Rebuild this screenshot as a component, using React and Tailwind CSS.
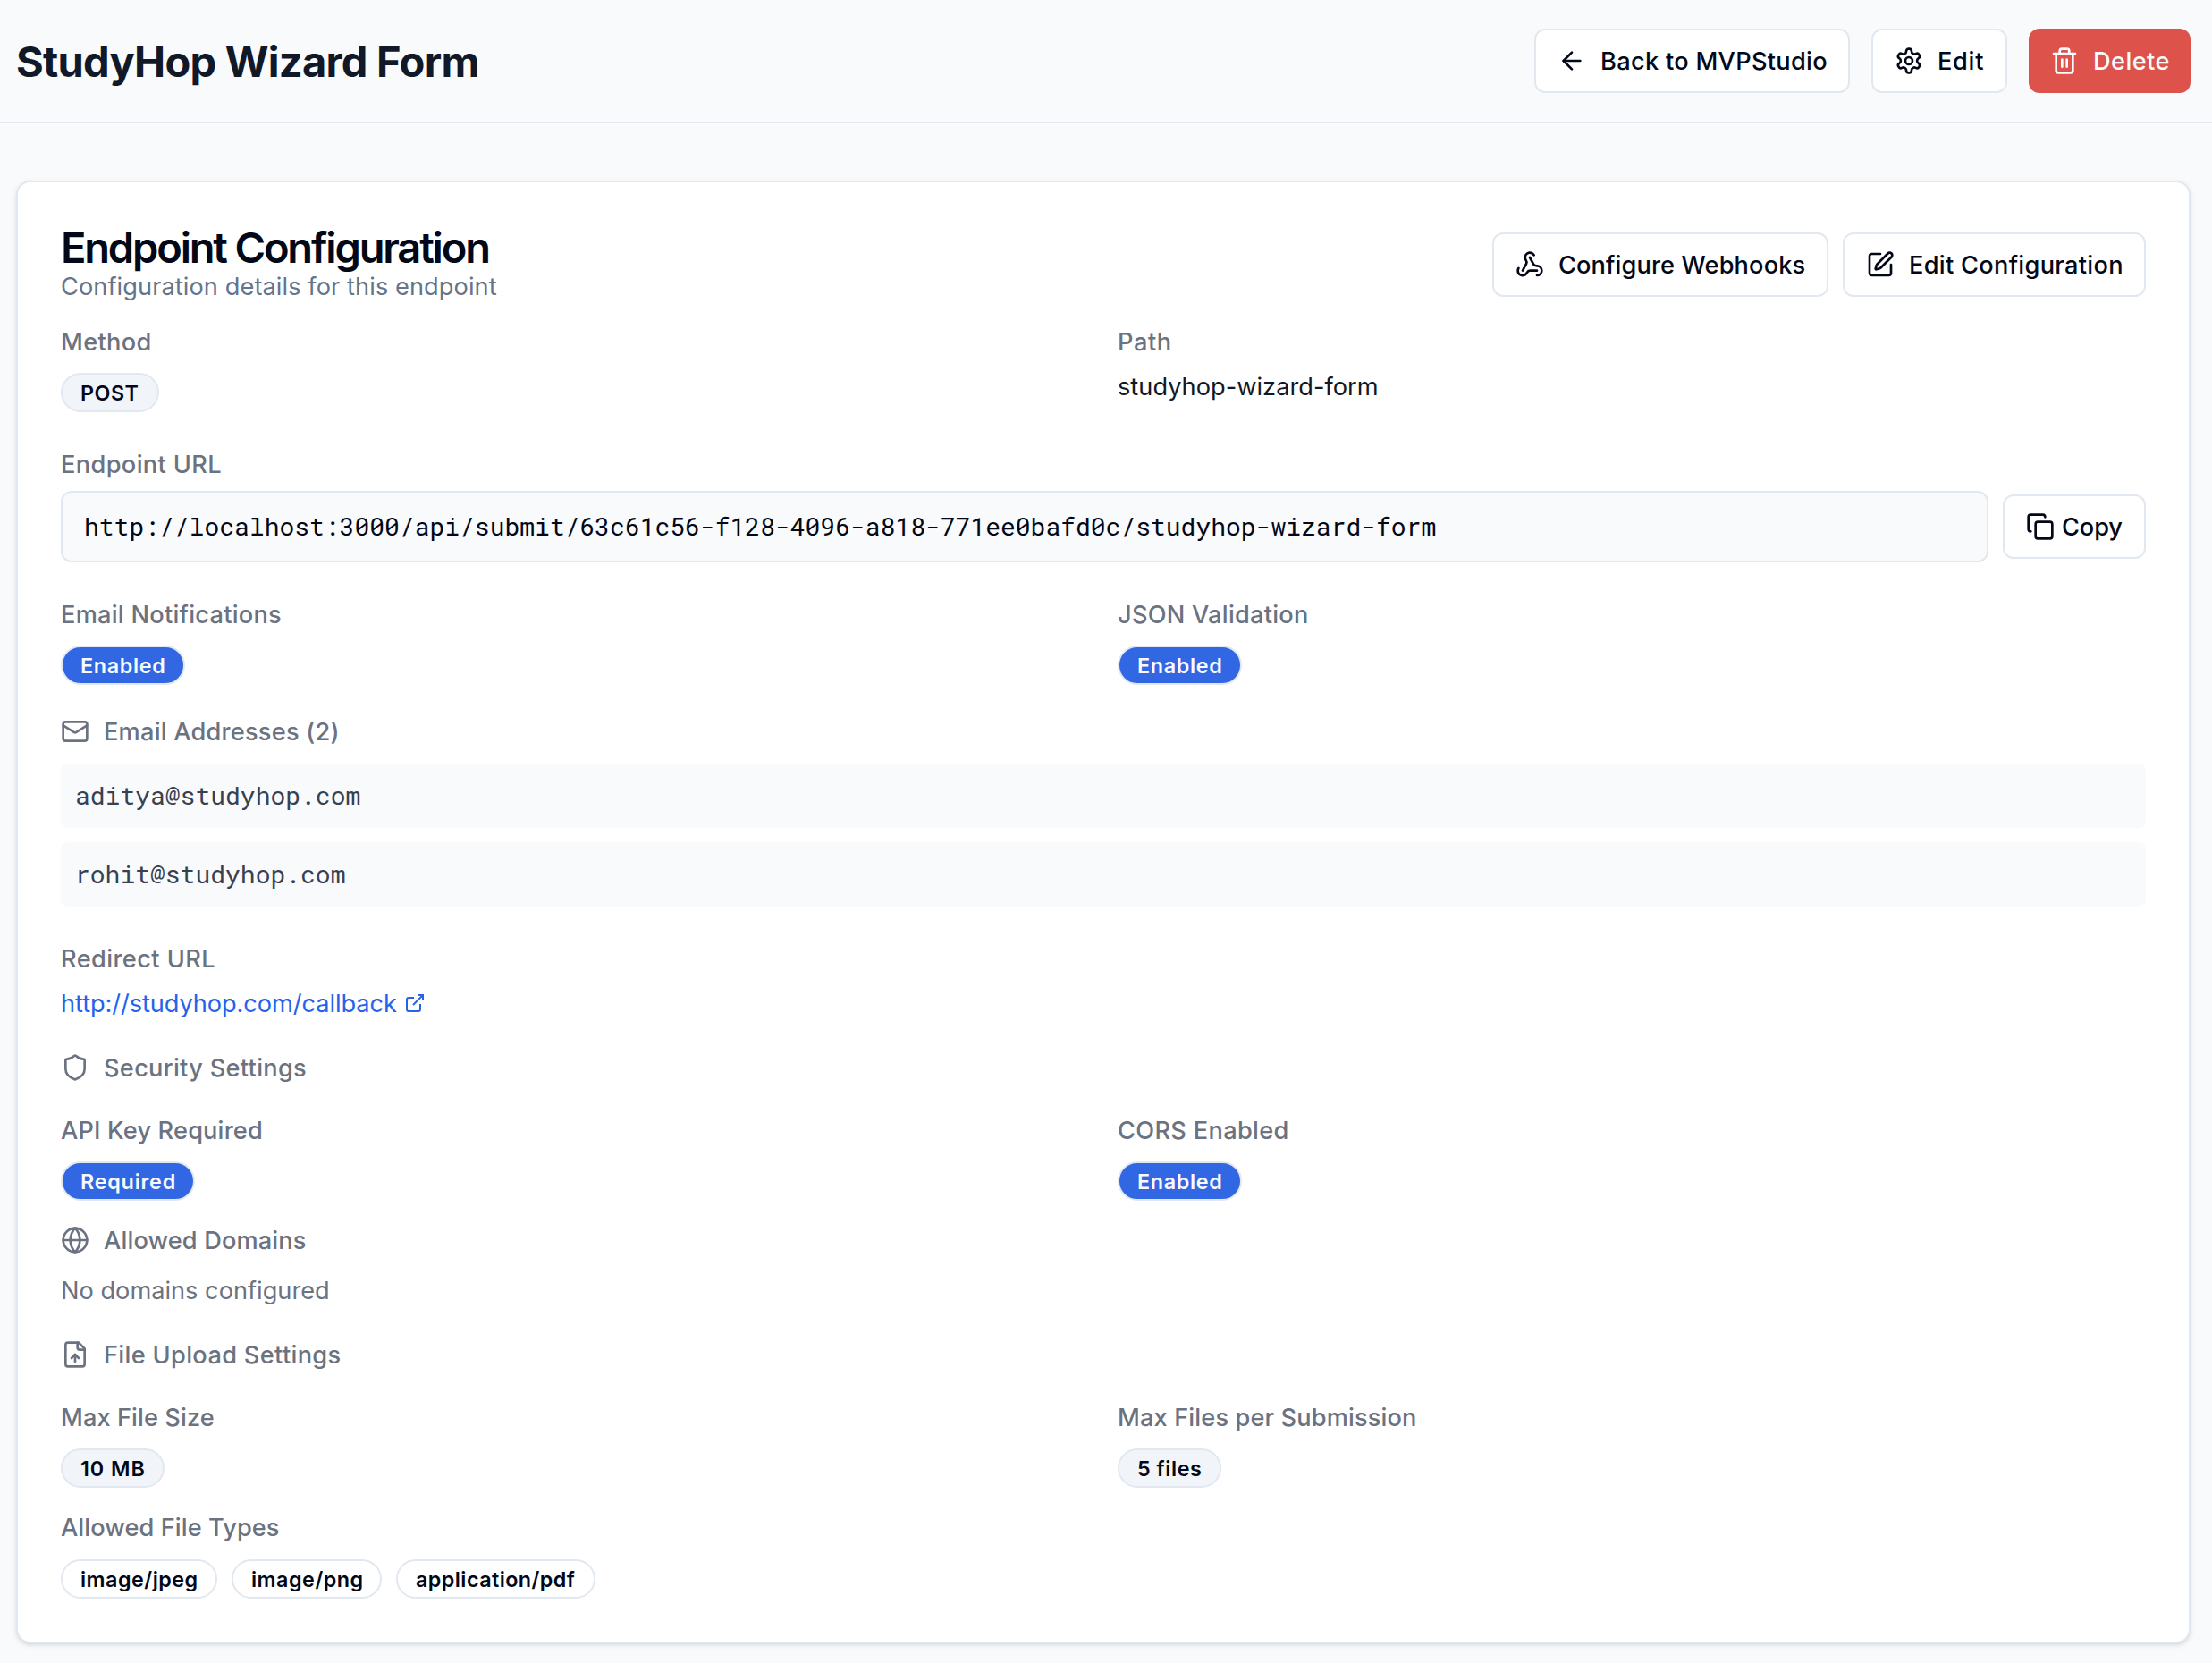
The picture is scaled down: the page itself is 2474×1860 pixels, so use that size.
import React from "react";
import { ArrowLeft, Copy, Globe, Mail, Shield, SquarePen, Trash2, Webhook } from "lucide-react";
import clsx from "clsx";

function Icon({ className, children, ...rest }) {
  return (
    <svg
      viewBox="0 0 24 24"
      fill="none"
      stroke="currentColor"
      strokeWidth="2"
      strokeLinecap="round"
      strokeLinejoin="round"
      className={clsx("shrink-0", className)}
      {...rest}
    >
      {children}
    </svg>
  );
}

function SettingsIcon({ className }) {
  return (
    <Icon className={className}>
      <path d="M12.22 2h-.44a2 2 0 0 0-2 2v.18a2 2 0 0 1-1 1.73l-.43.25a2 2 0 0 1-2 0l-.15-.08a2 2 0 0 0-2.73.73l-.22.38a2 2 0 0 0 .73 2.73l.15.1a2 2 0 0 1 1 1.72v.51a2 2 0 0 1-1 1.74l-.15.09a2 2 0 0 0-.73 2.73l.22.38a2 2 0 0 0 2.73.73l.15-.08a2 2 0 0 1 2 0l.43.25a2 2 0 0 1 1 1.73V20a2 2 0 0 0 2 2h.44a2 2 0 0 0 2-2v-.18a2 2 0 0 1 1-1.73l.43-.25a2 2 0 0 1 2 0l.15.08a2 2 0 0 0 2.73-.73l.22-.39a2 2 0 0 0-.73-2.73l-.15-.08a2 2 0 0 1-1-1.74v-.5a2 2 0 0 1 1-1.74l.15-.09a2 2 0 0 0 .73-2.73l-.22-.38a2 2 0 0 0-2.73-.73l-.15.08a2 2 0 0 1-2 0l-.43-.25a2 2 0 0 1-1-1.73V4a2 2 0 0 0-2-2z" />
      <circle cx="12" cy="12" r="3" />
    </Icon>
  );
}

function FileUpIcon({ className }) {
  return (
    <Icon className={className}>
      <path d="M15 2H6a2 2 0 0 0-2 2v16a2 2 0 0 0 2 2h12a2 2 0 0 0 2-2V7Z" />
      <path d="M14 2v4a2 2 0 0 0 2 2h4" />
      <path d="M12 12v6" />
      <path d="m15 15-3-3-3 3" />
    </Icon>
  );
}

function ExternalIcon({ className }) {
  return (
    <Icon className={className} strokeLinecap="butt" strokeLinejoin="miter">
      <path d="M18 13v6a2 2 0 0 1-2 2H5a2 2 0 0 1-2-2V8a2 2 0 0 1 2-2h6" />
      <path d="M15 3h6v6" />
      <path d="M10 14 21 3" />
    </Icon>
  );
}

const iconSize = "size-8 shrink-0";

const buttonTones = {
  outline: "border-2 border-[#e2e8f0] bg-white text-[#020817]",
  destructive: "bg-[#de524c] text-[#f8fafc]",
};

function Button({ icon: I, tone = "outline", gap = "gap-4", className, children }) {
  return (
    <button
      className={clsx(
        "flex h-[72px] shrink-0 items-center whitespace-nowrap rounded-xl px-6 text-[27.2px] font-medium leading-10",
        buttonTones[tone],
        gap,
        className
      )}
    >
      <I className={iconSize} />
      <span className="pt-0.5">{children}</span>
    </button>
  );
}

function Label({ className, children }) {
  return (
    <div className={clsx("h-10 whitespace-nowrap text-[27.2px] font-medium leading-[42px] text-[#6b7280]", className)}>
      {children}
    </div>
  );
}

function IconLabel({ icon: I, className, children }) {
  return (
    <div className={clsx("flex h-10 items-center gap-4 text-[#6b7280]", className)}>
      <I className={iconSize} />
      <Label>{children}</Label>
    </div>
  );
}

const badgeTones = {
  primary: "bg-[#3267e3] text-[#f8fafc]",
  secondary: "bg-[#f1f5f9] text-[#020817]",
  outline: "bg-white text-[#020817]",
};

function Badge({ tone = "primary", className, children }) {
  return (
    <div
      className={clsx(
        "flex h-11 items-center whitespace-nowrap rounded-full border-2 border-[#e2e8f0] pl-5 pt-px text-[23.3px] font-semibold leading-8",
        badgeTones[tone],
        className
      )}
    >
      {children}
    </div>
  );
}

function Columns({ className, children }) {
  return <div className={clsx("grid grid-cols-2 gap-8", className)}>{children}</div>;
}

const mono = "font-['Roboto_Mono','Liberation_Mono',monospace]";

export default function App() {
  return (
    <div className="h-[1860px] w-[2474px] overflow-hidden bg-[#f9fafc] font-['Inter',sans-serif]">
      <header className="flex h-[138px] items-center justify-between border-b-2 border-[#e2e8f0] pl-[18px] pr-6">
        <h1 className="whitespace-nowrap pt-0.5 text-[47px] font-bold leading-[64px] tracking-[-0.74px] text-[#111827]">
          StudyHop Wizard Form
        </h1>
        <div className="flex gap-6">
          <Button icon={ArrowLeft} className="w-[353px] tracking-[0.3px]">Back to MVPStudio</Button>
          <Button icon={SettingsIcon} className="w-[152px] tracking-[0.7px]">Edit</Button>
          <Button icon={Trash2} tone="destructive" className="w-[181px] tracking-[0.42px]">Delete</Button>
        </div>
      </header>

      <main className="mt-16 ml-[18px] mr-6 flex h-[1636px] flex-col rounded-2xl border-2 border-[#e2e8f0] bg-white p-12 shadow-[0_2px_6px_rgba(0,0,0,0.1),0_2px_4px_-2px_rgba(0,0,0,0.1)]">
        <div className="flex h-[88px] items-center justify-between">
          <div>
            <h2 className="h-12 whitespace-nowrap text-[47px] font-semibold leading-[50px] tracking-[-2.17px] text-[#020817]">
              Endpoint Configuration
            </h2>
            <p className="h-10 whitespace-nowrap text-[27.2px] leading-[42px] tracking-[0.08px] text-[#64748b]">
              Configuration details for this endpoint
            </p>
          </div>
          <div className="flex gap-4">
            <Button icon={Webhook} className="w-[376px] tracking-[0.12px]">Configure Webhooks</Button>
            <Button icon={SquarePen} className="w-[339px] tracking-[0.3px]">Edit Configuration</Button>
          </div>
        </div>

        <Columns className="mt-[22px] h-[99px]">
          <div>
            <Label className="tracking-[0.35px]">Method</Label>
            <Badge tone="secondary" className="mt-[15px] w-[110px] tracking-[0.5px]">POST</Badge>
          </div>
          <div>
            <Label className="tracking-[0.6px]">Path</Label>
            <p className="mt-2.5 h-10 text-[27.2px] leading-[42px] tracking-[0.02px] text-[#111827]">studyhop-wizard-form</p>
          </div>
        </Columns>

        <section className="mt-[38px]">
          <Label className="tracking-[0.37px]">Endpoint URL</Label>
          <div className="mt-2.5 flex items-center gap-4">
            <code
              className={clsx(
                "flex h-20 grow items-center rounded-xl border-2 border-[#e2e8f0] bg-[#f9fafc] px-6 text-[28px] leading-10 text-[#020817]",
                mono
              )}
            >
              http://localhost:3000/api/submit/63c61c56-f128-4096-a818-771ee0bafd0c/studyhop-wizard-form
            </code>
            <Button icon={Copy} gap="gap-2" className="w-40 tracking-[-0.1px]">Copy</Button>
          </div>
        </section>

        <Columns className="mt-[38px]">
          <div>
            <Label className="tracking-[0.25px]">Email Notifications</Label>
            <Badge className="mt-[15px] w-[139px] tracking-[0.68px]">Enabled</Badge>
          </div>
          <div>
            <Label className="tracking-[0.24px]">JSON Validation</Label>
            <Badge className="mt-[15px] w-[139px] tracking-[0.68px]">Enabled</Badge>
          </div>
        </Columns>

        <section className="mt-8">
          <IconLabel icon={Mail} className="tracking-[0.22px]">Email Addresses (2)</IconLabel>
          <ul className={clsx("mt-4 flex flex-col gap-4 text-[28px] leading-10 text-[#374151]", mono)}>
            {["aditya@studyhop.com", "rohit@studyhop.com"].map((email) => (
              <li key={email} className="flex h-[72px] items-center rounded-lg bg-[#f9fafc] px-4">
                {email}
              </li>
            ))}
          </ul>
        </section>

        <section className="mt-[38px]">
          <Label className="tracking-[0.4px]">Redirect URL</Label>
          <a className="mt-2.5 flex h-10 items-center gap-2 text-[27.2px] tracking-[-0.08px] text-[#2563eb]">
            <span className="h-10 leading-[42px]">http://studyhop.com/callback</span>
            <ExternalIcon className="size-6" />
          </a>
        </section>

        <IconLabel icon={Shield} className="mt-8 tracking-[0.3px]">Security Settings</IconLabel>

        <Columns className="mt-[30px]">
          <div>
            <Label className="tracking-[0.16px]">API Key Required</Label>
            <Badge className="mt-[15px] w-[150px] tracking-[0.8px]">Required</Badge>
          </div>
          <div>
            <Label className="tracking-[0.32px]">CORS Enabled</Label>
            <Badge className="mt-[15px] w-[139px] tracking-[0.68px]">Enabled</Badge>
          </div>
        </Columns>

        <IconLabel icon={Globe} className="mt-6 tracking-[0.14px]">Allowed Domains</IconLabel>
        <p className="mt-4 h-10 text-[27.2px] leading-[42px] tracking-[0px] text-[#6b7280]">No domains configured</p>

        <IconLabel icon={FileUpIcon} className="mt-8 tracking-[0.33px]">File Upload Settings</IconLabel>

        <Columns className="mt-[30px]">
          <div>
            <Label className="tracking-[0.08px]">Max File Size</Label>
            <Badge tone="secondary" className="mt-[15px] w-[116px] tracking-[0.95px]">10 MB</Badge>
          </div>
          <div>
            <Label className="tracking-[0.13px]">Max Files per Submission</Label>
            <Badge tone="secondary" className="mt-[15px] w-[116px] tracking-[0.55px]">5 files</Badge>
          </div>
        </Columns>

        <section className="mt-6">
          <Label className="tracking-[0.08px]">Allowed File Types</Label>
          <div className="mt-4 flex gap-4">
            <Badge tone="outline" className="w-[175px] tracking-[0.5px]">image/jpeg</Badge>
            <Badge tone="outline" className="w-[168px] tracking-[0.52px]">image/png</Badge>
            <Badge tone="outline" className="w-[223px] tracking-[0.45px]">application/pdf</Badge>
          </div>
        </section>
      </main>
    </div>
  );
}
